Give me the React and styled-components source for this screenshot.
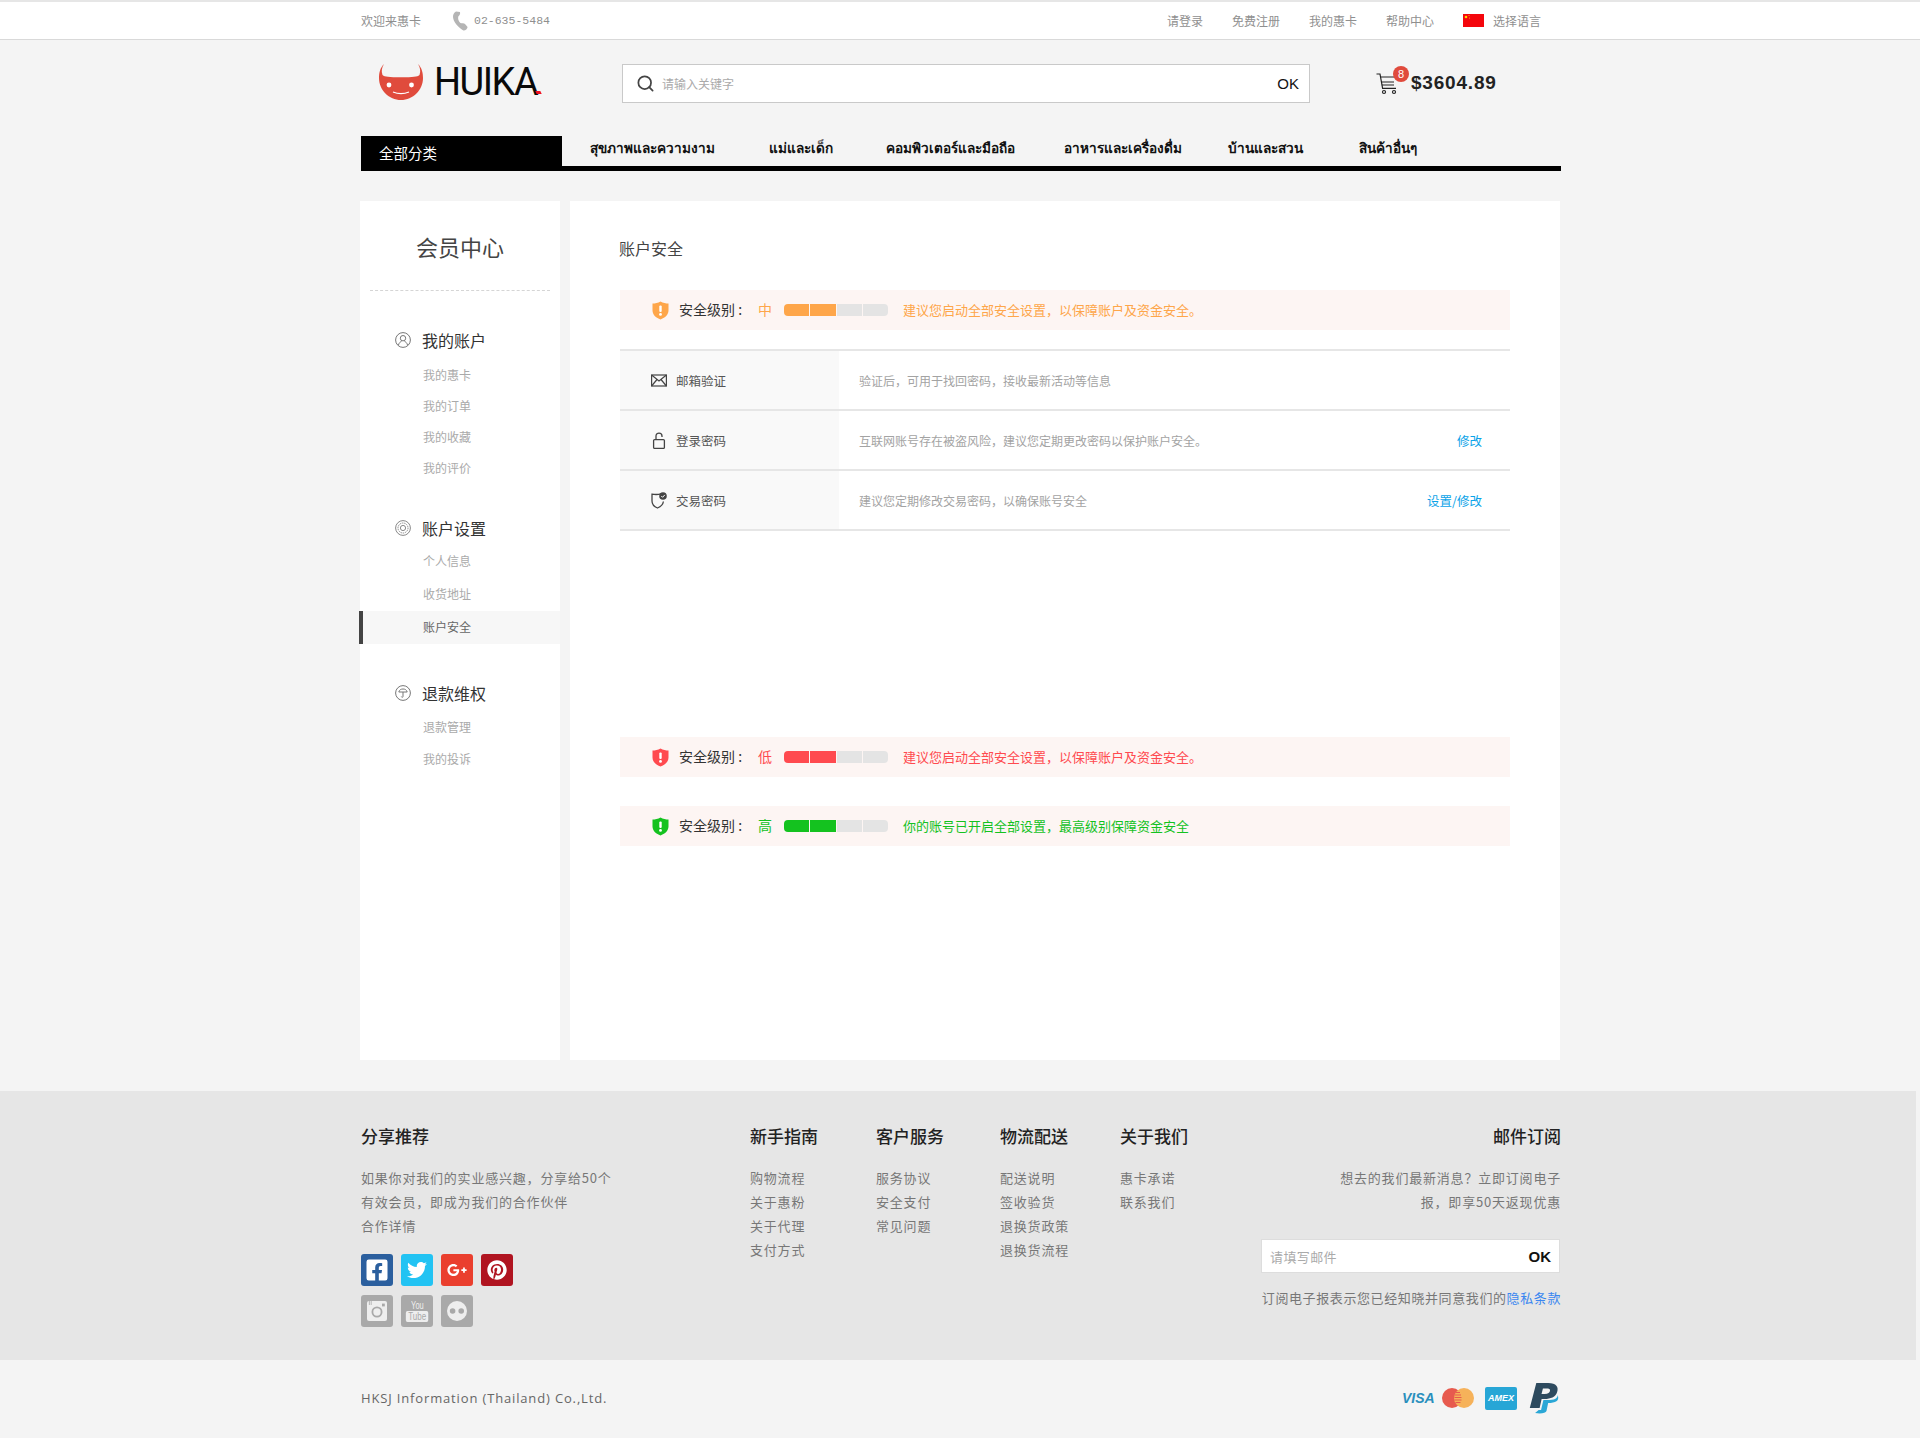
import React from 'react';
import styled, { createGlobalStyle } from 'styled-components';
import { Search } from 'lucide-react';
import { FaFacebookSquare, FaTwitter, FaGooglePlusG, FaPinterest } from 'react-icons/fa';

const GlobalStyle = createGlobalStyle`
  html, body { margin: 0; padding: 0; background: #f4f4f4; }
  body { font-family: "Noto Sans CJK SC", "Noto Sans", sans-serif; font-size: 12px; color: #999; }
  * { box-sizing: border-box; }
`;

const Page = styled.div`
  width: 1920px;
  height: 1438px;
  overflow: hidden;
`;

const Container = styled.div`
  width: 1200px;
  margin-left: 361px;
`;

const TopBar = styled.div`
  height: 40px;
  background: #fff;
  border-top: 2px solid #e6e6e6;
  border-bottom: 1px solid #d9d9d9;
`;

const TopInner = styled(Container)`
  height: 37px;
  display: flex;
  align-items: center;
  justify-content: space-between;
  padding-right: 20px;
`;

const TopGroup = styled.div`
  display: flex;
  align-items: center;
  gap: ${p => p.$gap}px;
`;

const TopText = styled.span`
  color: #8f8f8f;
  font-size: 12px;
`;

const PhoneNo = styled.span`
  font-family: "Liberation Mono", monospace;
  font-size: 11.5px;
  color: #8f8f8f;
  margin-left: 6px;
`;

const PhoneWrap = styled.div`
  display: flex;
  align-items: center;
`;

const LangWrap = styled.div`
  display: flex;
  align-items: center;
  gap: 9px;
`;

const Header = styled(Container)`
  height: 96px;
  display: flex;
  align-items: center;
`;

const Logo = styled.div`
  position: relative;
  display: flex;
  align-items: center;
  width: 243px;
  margin-left: 18px;
  margin-top: -12px;
`;

const LogoText = styled.span`
  font-family: "Roboto", "Liberation Sans", sans-serif;
  font-size: 38px;
  font-weight: 400;
  letter-spacing: -1.5px;
  color: #0a0a0a;
  margin-left: 11px;
  line-height: 1;
`;

const LogoDot = styled.i`
  position: absolute;
  left: 157px;
  top: 28px;
  width: 5px;
  height: 3px;
  background: #f01020;
  transform: skewX(25deg);
`;

const SearchBox = styled.div`
  width: 688px;
  height: 39px;
  margin-top: -9px;
  background: #fff;
  border: 1px solid #c9c9c9;
  display: flex;
  align-items: center;
  padding: 0 10px 0 13px;
  color: #444;
`;

const SearchHint = styled.span`
  flex: 1;
  margin-left: 7px;
  color: #aaa;
  font-size: 12px;
`;

const OkText = styled.span`
  font-family: "Liberation Sans", sans-serif;
  font-size: 15px;
  font-weight: ${p => (p.$bold ? 700 : 400)};
  color: #111;
`;

const Cart = styled.div`
  position: relative;
  display: flex;
  align-items: center;
  margin-left: 66px;
  margin-top: -11px;
`;

const CartBadge = styled.span`
  position: absolute;
  left: 17px;
  top: -5px;
  width: 16px;
  height: 16px;
  border-radius: 50%;
  background: #e04a3c;
  color: #fff;
  font-family: "Liberation Sans", sans-serif;
  font-size: 11px;
  line-height: 16px;
  text-align: center;
`;

const Price = styled.span`
  font-family: "Liberation Sans", sans-serif;
  font-weight: 700;
  font-size: 19px;
  letter-spacing: 0.8px;
  color: #222;
  margin-left: 13px;
`;

const Nav = styled(Container)`
  height: 35px;
  border-bottom: 5px solid #000;
  display: grid;
  grid-template-columns: 201px 207px 117px 178px 164px 131px 1fr;
`;

const NavAll = styled.div`
  background: #000;
  color: #fff;
  font-size: 14.5px;
  line-height: 34px;
  padding-left: 18px;
`;

const NavItem = styled.a`
  color: #111;
  font-family: "Noto Sans", "DejaVu Sans", sans-serif;
  font-size: 13.6px;
  font-weight: 700;
  line-height: 23px;
  margin-left: ${p => p.$left || 0}px;
  white-space: nowrap;
`;

const Content = styled(Container)`
  margin-top: 30px;
  height: 859px;
  margin-left: 360px;
  display: flex;
  gap: 10px;
`;

const Sidebar = styled.aside`
  width: 200px;
  background: #fff;
`;

const SideTitle = styled.div`
  margin: 0 10px;
  height: 90px;
  padding-top: 28px;
  border-bottom: 1px dashed #d5d5d5;
  font-size: 22px;
  line-height: 34px;
  color: #444;
  text-align: center;
`;

const SideGroup = styled.div`
  margin-top: ${p => p.$gap}px;
`;

const SideHead = styled.div`
  display: flex;
  align-items: center;
  height: 30px;
  padding-left: 35px;
  gap: 11px;
  font-size: 16px;
  color: #333;
`;

const SubList = styled.div`
  margin-top: ${p => p.$top}px;
`;

const SubItem = styled.div`
  height: ${p => p.$h}px;
  line-height: ${p => p.$h - 2}px;
  font-size: 12px;
  margin-left: ${p => (p.$active ? -1 : 0)}px;
  padding-left: ${p => (p.$active ? 60 : 63)}px;
  color: ${p => (p.$active ? '#666' : '#aaa')};
  background: ${p => (p.$active ? '#f7f7f7' : 'transparent')};
  border-left: ${p => (p.$active ? '4px solid #444' : 'none')};
`;

const Main = styled.main`
  width: 990px;
  background: #fff;
  padding: 35px 50px 0 50px;
`;

const MainTitle = styled.h2`
  margin: 0 0 0 -1px;
  font-size: 16px;
  font-weight: 400;
  line-height: 24px;
  color: #444;
`;

const Banner = styled.div`
  height: 40px;
  margin-top: ${p => p.$top}px;
  background: #fdf5f3;
  display: flex;
  align-items: center;
  padding-left: 32px;
`;

const LevelLabel = styled.span`
  margin: 0 0 2px 10px;
  font-size: 14px;
  color: #333;
  width: 79px;
  white-space: pre;
`;

const LevelValue = styled.span`
  margin-bottom: 2px;
  font-size: 14px;
  color: ${p => p.$color};
  width: 26px;
`;

const Bars = styled.div`
  display: flex;
  gap: 1px;
  width: 104px;
  height: 12px;
  border-radius: 4px;
  overflow: hidden;
`;

const Bar = styled.i`
  flex: 1;
  background: ${p => p.$color};
`;

const LevelMsg = styled.span`
  margin: 0 0 2px 15px;
  font-size: 13px;
  color: ${p => p.$color};
`;

const Table = styled.div`
  margin-top: 19px;
  border-top: 2px solid #e6e6e6;
`;

const Row = styled.div`
  display: flex;
  height: 60px;
  border-bottom: 2px solid #e6e6e6;
`;

const RowHead = styled.div`
  width: 219px;
  background: #f9f9f9;
  display: flex;
  align-items: center;
  gap: 9px;
  padding-left: 31px;
  color: #555;
  font-size: 12.5px;
`;

const RowDesc = styled.div`
  flex: 1;
  display: flex;
  align-items: center;
  padding-left: 20px;
  color: #a3a3a3;
  font-size: 12px;
`;

const RowAction = styled.a`
  display: flex;
  align-items: center;
  padding-right: 28px;
  color: #0ba3e8;
  font-size: 12.5px;
`;

const Footer = styled.footer`
  margin-top: 31px;
  width: 1916px;
  height: 269px;
  background: #e6e6e6;
  padding-top: 33px;
`;

const FooterInner = styled(Container)`
  display: flex;
`;

const FootCol = styled.div`
  width: ${p => p.$w}px;
`;

const FootNews = styled.div`
  flex: 1;
  display: flex;
  flex-direction: column;
  align-items: flex-end;
  text-align: right;
`;

const FootTitle = styled.h4`
  margin: 0 0 18px;
  font-size: 17px;
  font-weight: 500;
  line-height: 24px;
  color: #222;
`;

const FootLine = styled.div`
  font-size: 13px;
  line-height: 24px;
  letter-spacing: 0.8px;
  color: #777;
  white-space: nowrap;
`;

const Socials = styled.div`
  margin-top: 16px;
  display: grid;
  grid-template-columns: repeat(4, 32px);
  grid-auto-rows: 32px;
  gap: 9px 8px;
`;

const Social = styled.a`
  display: flex;
  flex-direction: column;
  align-items: center;
  justify-content: center;
  border-radius: 3px;
  background: ${p => p.$bg};
  color: ${p => p.$fg || '#fff'};
`;

const YouText = styled.span`
  font-family: "Liberation Sans", sans-serif;
  font-size: 10px;
  line-height: 10px;
  color: #eee;
  transform: scaleX(0.75);
`;

const TubeText = styled.span`
  font-family: "Liberation Sans", sans-serif;
  font-size: 10px;
  line-height: 11px;
  padding: 0 3px;
  border-radius: 2px;
  background: #eee;
  color: #a9a9a9;
  transform: scaleX(0.8);
`;

const NewsInput = styled.div`
  margin-top: 25px;
  margin-right: 1px;
  width: 299px;
  height: 34px;
  background: #fff;
  border: 1px solid #ddd;
  display: flex;
  align-items: center;
  justify-content: space-between;
  padding: 0 8px;
`;

const NewsHint = styled.span`
  font-size: 13px;
  letter-spacing: 0.4px;
  color: #aaa;
`;

const Terms = styled(FootLine)`
  margin-top: 13px;
  letter-spacing: 0.6px;
`;

const TermsLink = styled.a`
  color: #3b86f0;
`;

const Bottom = styled.div`
  height: 78px;
  background: #f4f4f4;
`;

const BottomInner = styled(Container)`
  height: 76px;
  display: flex;
  align-items: center;
  justify-content: space-between;
  padding-right: 1px;
`;

const Copy = styled.span`
  font-family: "Open Sans", "Noto Sans", sans-serif;
  font-size: 13px;
  letter-spacing: 0.85px;
  color: #666;
`;

const Pays = styled.div`
  display: flex;
  align-items: center;
  gap: 11px;
`;

const VisaText = styled.span`
  font-family: "Liberation Sans", sans-serif;
  font-size: 14px;
  font-weight: 700;
  font-style: italic;
  color: #2a8fbd;
  width: 29px;
  white-space: nowrap;
`;

const AmexBadge = styled.span`
  width: 32px;
  height: 23px;
  border-radius: 2px;
  background: #27a6d6;
  color: #fff;
  font-family: "Liberation Sans", sans-serif;
  font-size: 9px;
  font-weight: 700;
  font-style: italic;
  line-height: 23px;
  text-align: center;
`;

const ORANGE = '#fea64a';
const RED = '#ff4a4f';
const GREEN = '#14c21f';

const Shield = ({ color }) => (
  <svg width="17" height="19" viewBox="0 0 17 19">
    <path d="M8.5 0.5 C11 2 14 2.5 16.5 2.5 V9.5 C16.5 14 12.5 17 8.5 18.5 C4.5 17 0.5 14 0.5 9.5 V2.5 C3 2.5 6 2 8.5 0.5Z" fill={color} />
    <rect x="7.3" y="4.5" width="2.4" height="6.5" rx="1" fill="#fff" />
    <circle cx="8.5" cy="13.4" r="1.4" fill="#fff" />
  </svg>
);

const LevelBanner = ({ top, color, level, msg }) => (
  <Banner $top={top}>
    <Shield color={color} />
    <LevelLabel>安全级别 :</LevelLabel>
    <LevelValue $color={color}>{level}</LevelValue>
    <Bars>
      <Bar $color={color} />
      <Bar $color={color} />
      <Bar $color="#e4e4e4" />
      <Bar $color="#e4e4e4" />
    </Bars>
    <LevelMsg $color={color}>{msg}</LevelMsg>
  </Banner>
);

const UserIcon = () => (
  <svg width="16" height="16" viewBox="0 0 16 16" fill="none" stroke="#777" strokeWidth="1">
    <circle cx="8" cy="8" r="7.4" />
    <circle cx="8" cy="6.2" r="2.7" />
    <path d="M3.4 13.2 C4 10.8 5.6 9.6 6.6 9.2 M12.6 13.2 C12 10.8 10.4 9.6 9.4 9.2" />
  </svg>
);

const TargetIcon = () => (
  <svg width="16" height="16" viewBox="0 0 16 16" fill="none" stroke="#888" strokeWidth="1">
    <circle cx="8" cy="8" r="7.4" />
    <circle cx="8" cy="8" r="5" strokeDasharray="1.4 0.8" />
    <circle cx="8" cy="8" r="2.6" />
  </svg>
);

const UmbrellaIcon = () => (
  <svg width="16" height="16" viewBox="0 0 16 16" fill="none" stroke="#777" strokeWidth="1">
    <circle cx="8" cy="8" r="7.4" />
    <path d="M3.8 7 C4.4 4.8 6 4 8 4 C10 4 11.6 4.8 12.2 7 Z" />
    <path d="M8 7 V11.4 C8 12.6 6.6 12.6 6.4 11.6" />
  </svg>
);

const MailIcon = () => (
  <svg width="16" height="13" viewBox="0 0 16 13" fill="none" stroke="#444" strokeWidth="1.2">
    <rect x="0.6" y="1" width="14.8" height="11" />
    <path d="M0.6 1 L8 7 L15.4 1 M0.6 12 L6 5.5 M15.4 12 L10 5.5" />
  </svg>
);

const LockIcon = () => (
  <svg width="16" height="17" viewBox="0 0 16 17" fill="none" stroke="#444" strokeWidth="1.3">
    <rect x="2.6" y="7.6" width="10.8" height="8.8" rx="1" />
    <path d="M5 7.6 V4 C5 0.2 11 0.2 11 4 V5" />
  </svg>
);

const ShieldCheckIcon = () => (
  <svg width="16" height="17" viewBox="0 0 16 17" fill="none">
    <path d="M10 1.8 C7.5 2.6 4 2.6 1 2.2 V9 C1 12.5 4 15 6.5 16 C9 15 12 12.8 12.4 9.5" stroke="#444" strokeWidth="1.3" />
    <circle cx="12" cy="4" r="3.8" fill="#444" />
    <path d="M10.3 4 L11.6 5.3 L13.8 2.9" stroke="#fff" strokeWidth="1" />
  </svg>
);

const FlagIcon = () => (
  <svg width="21" height="13" viewBox="0 0 21 13">
    <rect width="21" height="13" fill="#f4060c" />
    <circle cx="3" cy="3" r="1.3" fill="#ffd900" />
    <circle cx="6" cy="1.5" r="0.5" fill="#ffd900" />
    <circle cx="6.6" cy="4" r="0.5" fill="#ffd900" />
  </svg>
);

const PhoneIcon = () => (
  <svg width="17" height="20" viewBox="0 0 17 20" fill="#b5b5b5">
    <path d="M5 0.5 L9 1 C9.5 3 8.6 4.6 7.4 5.2 C6.6 7.4 7.4 10.2 9.4 12 C11 12.4 13 12.2 14 13 L16.6 16 C16.4 18 14.4 19.6 12.4 19.4 C7.4 16.6 1.6 10.6 2 5 C2.4 3 3.4 1.4 5 0.5Z" />
  </svg>
);

const DevilLogo = () => (
  <svg width="44" height="36" viewBox="0 0 44 36">
    <path d="M5 0 C3 3 2 7 3.5 11 C6 13 9.5 13.2 22 13.2 C34.5 13.2 38 13 40.5 11 C42 7 41 3 39 0 C43 4 44 9 44 14 C44 26 34 36 22 36 C10 36 0 26 0 14 C0 9 1 4 5 0Z" fill="#e04b3c" />
    <circle cx="10" cy="21" r="2.4" fill="#fff" />
    <circle cx="32.5" cy="21" r="2.4" fill="#fff" />
    <path d="M14 28 C19 30 25 30 30 28" fill="none" stroke="#fff" strokeWidth="1.3" />
  </svg>
);

const CartIcon = () => (
  <svg width="22" height="24" viewBox="0 0 22 24" fill="none" stroke="#222" strokeWidth="1.2">
    <path d="M0.5 3 H4 L6.6 17.4 H20" />
    <path d="M4.6 6 H19 M5.4 11 H18 M5.9 14 H18" strokeWidth="1" />
    <circle cx="8" cy="21" r="1.5" />
    <circle cx="18" cy="21" r="1.5" />
  </svg>
);

const InstagramIcon = () => (
  <svg width="20" height="20" viewBox="0 0 20 20">
    <rect width="20" height="20" rx="2" fill="#eee" />
    <circle cx="10" cy="11" r="4.6" fill="none" stroke="#a9a9a9" strokeWidth="1.8" />
    <rect x="15" y="2.6" width="2.8" height="2.8" fill="#a9a9a9" />
    <path d="M2.4 0 V4 M4.2 0 V4" stroke="#a9a9a9" strokeWidth="0.8" />
  </svg>
);

const FlickrIcon = () => (
  <svg width="20" height="20" viewBox="0 0 20 20">
    <circle cx="10" cy="10" r="10" fill="#eee" />
    <circle cx="5.6" cy="10" r="2.8" fill="#a9a9a9" />
    <circle cx="14.2" cy="10" r="2.8" fill="#a9a9a9" />
  </svg>
);

const McIcon = () => (
  <svg width="32" height="20" viewBox="0 0 32 20">
    <circle cx="10" cy="10" r="10" fill="#e75a4e" />
    <circle cx="22" cy="10" r="10" fill="#f6b25a" />
    <path d="M13 7 H19 M12.5 9.5 H19.5 M12.5 12 H19.5 M13.5 14.5 H18.5 M14 4.5 H18" stroke="#e75a4e" strokeWidth="1" />
  </svg>
);

const PaypalIcon = () => (
  <svg width="32" height="32" viewBox="0 0 27 32" preserveAspectRatio="none">
    <path d="M25 13 C27 19 23 21 17 21 L15.6 29 C15 31 11 32 6 31 L9 28 H11 L13 18 H18 C24 18 25 15 25 13Z" fill="#2aa7d6" />
    <path d="M7 1 H17 C24 1 26 5 24.6 10 C23.4 15 19 17 14 17 H11.5 L9.8 26 H1.5Z M12.6 6.6 L11.4 12 H14 C17 12 18.4 10.6 18.6 8.6 C18.8 7 17.6 6.6 15.6 6.6Z" fill="#2d4a5e" fillRule="evenodd" />
  </svg>
);

const sideGroups = [
  { gap: 34, title: '我的账户', icon: <UserIcon />, top: 5, h: 31, items: ['我的惠卡', '我的订单', '我的收藏', '我的评价'] },
  { gap: 29, title: '账户设置', icon: <TargetIcon />, top: 2, h: 33, items: ['个人信息', '收货地址', '账户安全'] },
  { gap: 34, title: '退款维权', icon: <UmbrellaIcon />, top: 4, h: 32, items: ['退款管理', '我的投诉'] },
];

const rows = [
  { icon: <MailIcon />, label: '邮箱验证', desc: '验证后，可用于找回密码，接收最新活动等信息' },
  { icon: <LockIcon />, label: '登录密码', desc: '互联网账号存在被盗风险，建议您定期更改密码以保护账户安全。', action: '修改' },
  { icon: <ShieldCheckIcon />, label: '交易密码', desc: '建议您定期修改交易密码，以确保账号安全', action: '设置/修改' },
];

const footCols = [
  { w: 126, title: '新手指南', items: ['购物流程', '关于惠粉', '关于代理', '支付方式'] },
  { w: 124, title: '客户服务', items: ['服务协议', '安全支付', '常见问题'] },
  { w: 120, title: '物流配送', items: ['配送说明', '签收验货', '退换货政策', '退换货流程'] },
  { w: 120, title: '关于我们', items: ['惠卡承诺', '联系我们'] },
];

const navItems = ['สุขภาพและความงาม', 'แม่และเด็ก', 'คอมพิวเตอร์และมือถือ', 'อาหารและเครื่องดื่ม', 'บ้านและสวน', 'สินค้าอื่นๆ'];

export default function App() {
  return (
    <Page>
      <GlobalStyle />
      <TopBar>
        <TopInner>
          <TopGroup $gap={30}>
            <TopText>欢迎来惠卡</TopText>
            <PhoneWrap>
              <PhoneIcon />
              <PhoneNo>02-635-5484</PhoneNo>
            </PhoneWrap>
          </TopGroup>
          <TopGroup $gap={29}>
            <TopText>请登录</TopText>
            <TopText>免费注册</TopText>
            <TopText>我的惠卡</TopText>
            <TopText>帮助中心</TopText>
            <LangWrap>
              <FlagIcon />
              <TopText>选择语言</TopText>
            </LangWrap>
          </TopGroup>
        </TopInner>
      </TopBar>

      <Header>
        <Logo>
          <DevilLogo />
          <LogoText>HUIKA</LogoText>
          <LogoDot />
        </Logo>
        <SearchBox>
          <Search size={19} strokeWidth={2.2} />
          <SearchHint>请输入关键字</SearchHint>
          <OkText>OK</OkText>
        </SearchBox>
        <Cart>
          <CartIcon />
          <CartBadge>8</CartBadge>
          <Price>$3604.89</Price>
        </Cart>
      </Header>

      <Nav>
        <NavAll>全部分类</NavAll>
        {navItems.map((item, i) => (
          <NavItem key={item} $left={i === 0 ? 28 : 0}>{item}</NavItem>
        ))}
      </Nav>

      <Content>
        <Sidebar>
          <SideTitle>会员中心</SideTitle>
          {sideGroups.map(group => (
            <SideGroup key={group.title} $gap={group.gap}>
              <SideHead>
                {group.icon}
                {group.title}
              </SideHead>
              <SubList $top={group.top}>
                {group.items.map(item => (
                  <SubItem key={item} $h={group.h} $active={item === '账户安全'}>{item}</SubItem>
                ))}
              </SubList>
            </SideGroup>
          ))}
        </Sidebar>

        <Main>
          <MainTitle>账户安全</MainTitle>
          <LevelBanner top={30} color={ORANGE} level="中" msg="建议您启动全部安全设置，以保障账户及资金安全。" />
          <Table>
            {rows.map(row => (
              <Row key={row.label}>
                <RowHead>
                  {row.icon}
                  {row.label}
                </RowHead>
                <RowDesc>{row.desc}</RowDesc>
                {row.action && <RowAction>{row.action}</RowAction>}
              </Row>
            ))}
          </Table>
          <LevelBanner top={206} color={RED} level="低" msg="建议您启动全部安全设置，以保障账户及资金安全。" />
          <LevelBanner top={29} color={GREEN} level="高" msg="你的账号已开启全部设置，最高级别保障资金安全" />
        </Main>
      </Content>

      <Footer>
        <FooterInner>
          <FootCol $w={389}>
            <FootTitle>分享推荐</FootTitle>
            <FootLine>如果你对我们的实业感兴趣，分享给50个</FootLine>
            <FootLine>有效会员，即成为我们的合作伙伴</FootLine>
            <FootLine>合作详情</FootLine>
            <Socials>
              <Social $bg="#2b5f9e"><FaFacebookSquare size={24} /></Social>
              <Social $bg="#22c3f3"><FaTwitter size={20} /></Social>
              <Social $bg="#ea3f2e"><FaGooglePlusG size={20} /></Social>
              <Social $bg="#b01420"><FaPinterest size={20} /></Social>
              <Social $bg="#a9a9a9"><InstagramIcon /></Social>
              <Social $bg="#a9a9a9">
                <YouText>You</YouText>
                <TubeText>Tube</TubeText>
              </Social>
              <Social $bg="#a9a9a9"><FlickrIcon /></Social>
            </Socials>
          </FootCol>
          {footCols.map(col => (
            <FootCol key={col.title} $w={col.w}>
              <FootTitle>{col.title}</FootTitle>
              {col.items.map(item => (
                <FootLine key={item}>{item}</FootLine>
              ))}
            </FootCol>
          ))}
          <FootNews>
            <FootTitle>邮件订阅</FootTitle>
            <FootLine>想去的我们最新消息？立即订阅电子</FootLine>
            <FootLine>报，即享50天返现优惠</FootLine>
            <NewsInput>
              <NewsHint>请填写邮件</NewsHint>
              <OkText $bold>OK</OkText>
            </NewsInput>
            <Terms>订阅电子报表示您已经知晓并同意我们的<TermsLink>隐私条款</TermsLink></Terms>
          </FootNews>
        </FooterInner>
      </Footer>

      <Bottom>
        <BottomInner>
          <Copy>HKSJ Information (Thailand) Co.,Ltd.</Copy>
          <Pays>
            <VisaText>VISA</VisaText>
            <McIcon />
            <AmexBadge>AMEX</AmexBadge>
            <PaypalIcon />
          </Pays>
        </BottomInner>
      </Bottom>
    </Page>
  );
}
